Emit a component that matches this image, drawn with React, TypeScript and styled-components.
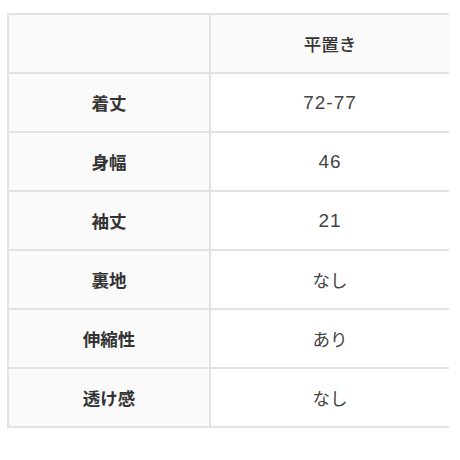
import React from 'react'
import styled, { createGlobalStyle } from 'styled-components'

const GlobalStyle = createGlobalStyle`
  body {
    margin: 0;
    background: #ffffff;
    font-family: "Liberation Sans", "Noto Sans CJK JP", sans-serif;
  }
`

const Page = styled.div`
  width: 460px;
  height: 460px;
  padding: 13px 11px 0 7px;
  box-sizing: border-box;
`

const Table = styled.table`
  width: 100%;
  border-collapse: collapse;
  border-top: 2px solid #e2e2e2;
  border-left: 2px solid #e2e2e2;
  table-layout: fixed;
`

const Row = styled.tr`
  height: 59px;
`

const Cell = styled.td<{ $head?: boolean; $shade?: boolean }>`
  border-bottom: 2px solid #e2e2e2;
  text-align: center;
  vertical-align: middle;
  padding: 0;
  font-size: 17.5px;
  color: ${p => (p.$head ? '#333333' : '#444444')};
  font-weight: ${p => (p.$head ? 700 : 400)};
  background: ${p => (p.$shade ? '#fafafa' : '#ffffff')};
  &:first-child {
    width: 200px;
    border-right: 2px solid #e2e2e2;
  }
`

const Value = styled.span<{ $num?: boolean }>`
  font-size: ${p => (p.$num ? '19px' : '17.5px')};
  letter-spacing: ${p => (p.$num ? '1px' : '0')};
`

const ColumnTitle = styled.span`
  font-weight: 500;
  color: #333333;
`

const rows: [string, string][] = [
  ['着丈', '72-77'],
  ['身幅', '46'],
  ['袖丈', '21'],
  ['裏地', 'なし'],
  ['伸縮性', 'あり'],
  ['透け感', 'なし'],
]

const App: React.FC = () => {
  return (
    <Page>
      <GlobalStyle />
      <Table>
        <tbody>
          <Row>
            <Cell $head $shade></Cell>
            <Cell $shade>
              <ColumnTitle>平置き</ColumnTitle>
            </Cell>
          </Row>
          {rows.map(([label, value]) => (
            <Row key={label}>
              <Cell $head $shade>{label}</Cell>
              <Cell>
                <Value $num={/\d/.test(value)}>{value}</Value>
              </Cell>
            </Row>
          ))}
        </tbody>
      </Table>
    </Page>
  )
}

export default App
